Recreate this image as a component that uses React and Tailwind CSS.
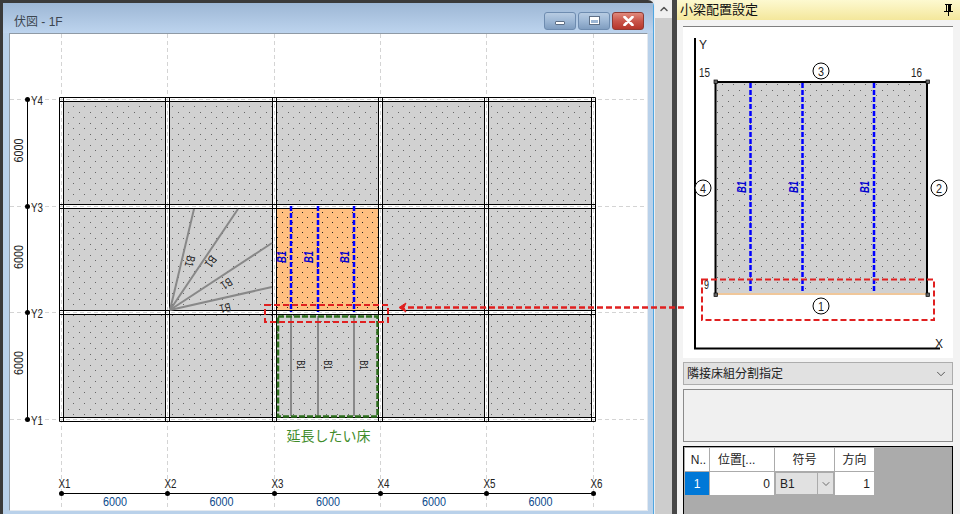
import React from "react";
import { ChevronDown, ChevronUp } from "lucide-react";

const xs = [61.5, 167.5, 274.5, 380.5, 486.5, 593.5];
const ys = [99.5, 206.5, 312.5, 419.5];
const beamX = [291, 318, 354];
const font = "'Liberation Sans', 'Noto Sans CJK JP', sans-serif";
const cjk = "font-['Liberation_Sans','Noto_Sans_CJK_JP',sans-serif]";

const DotPattern = ({ id, bg, dot, size = 11 }) => (
  <pattern id={id} width={size} height={size} patternUnits="userSpaceOnUse">
    <rect width={size} height={size} fill={bg} />
    <rect x={2} y={2} width={1} height={1} fill={dot} />
    <rect x={2 + Math.floor(size / 2)} y={2 + Math.floor(size / 2)} width={1} height={1} fill={dot} />
  </pattern>
);

// 幅の狭い図面文字
const Label = ({ length, size = 12, fill = "#222", ...rest }) => (
  <text
    fontFamily={font}
    fontSize={size}
    fill={fill}
    textLength={length}
    lengthAdjust="spacingAndGlyphs"
    {...rest}
  />
);

// 伏図の本体
const PlanDrawing = () => (
  <svg viewBox="10 34 635 476" className="block w-[635px] h-[476px]">
    <defs>
      <DotPattern id="floor" bg="#d1d1d1" dot="#666666" />
      <DotPattern id="floorOrange" bg="#ffbf80" dot="#222222" size={10} />
    </defs>

    {xs.map((x) => (
      <line key={x} x1={x} y1={34} x2={x} y2={510} stroke="#d4d4d4" strokeDasharray="4 3" />
    ))}
    {ys.map((y) => (
      <line key={y} x1={10} y1={y} x2={645} y2={y} stroke="#d4d4d4" strokeDasharray="4 3" />
    ))}

    {xs.slice(0, -1).map((x, i) =>
      ys.slice(0, -1).map((y, j) => (
        <rect
          key={`${i}-${j}`}
          x={x + 2}
          y={y + 2}
          width={xs[i + 1] - x - 4}
          height={ys[j + 1] - y - 4}
          fill={i === 2 && j === 1 ? "url(#floorOrange)" : "url(#floor)"}
        />
      ))
    )}

    {xs.map((x) => (
      <g key={x} stroke="#000" fill="none">
        <line x1={x - 2} y1={97.5} x2={x - 2} y2={421.5} />
        <line x1={x + 2} y1={97.5} x2={x + 2} y2={421.5} />
      </g>
    ))}
    {ys.map((y) => (
      <g key={y} stroke="#000" fill="none">
        <line x1={59.5} y1={y - 2} x2={595.5} y2={y - 2} />
        <line x1={59.5} y1={y + 2} x2={595.5} y2={y + 2} />
      </g>
    ))}

    {/* 放射状の小梁 */}
    <g stroke="#888" strokeWidth="2">
      <line x1={170} y1={310} x2={194} y2={209} />
      <line x1={170} y1={310} x2={238} y2={209} />
      <line x1={170} y1={310} x2={272} y2={243} />
      <line x1={170} y1={310} x2={272} y2={287} />
    </g>
    <g textAnchor="middle" dominantBaseline="middle">
      <Label size={12} length={11} transform="translate(189 261) rotate(103)">B1</Label>
      <Label size={12} length={11} transform="translate(210 261) rotate(124)">B1</Label>
      <Label size={12} length={11} transform="translate(226 283) rotate(147)">B1</Label>
      <Label size={12} length={11} transform="translate(225 307) rotate(167)">B1</Label>
    </g>

    {/* 小梁 */}
    {beamX.map((x) => (
      <g key={x}>
        <line x1={x} y1={206} x2={x} y2={312} stroke="#0000ff" strokeWidth="2.5" strokeDasharray="5 2" />
        <Label
          transform={`translate(${x - 8} 257) rotate(-90)`}
          size={12}
          length={12}
          fontWeight="bold"
          fontStyle="italic"
          fill="#0000d0"
          textAnchor="middle"
          dominantBaseline="middle"
        >
          B1
        </Label>
        <line x1={x} y1={316} x2={x} y2={416} stroke="#888" strokeWidth="2" />
        <Label
          transform={`translate(${x + 9} 365) rotate(90)`}
          size={11}
          length={9}
          textAnchor="middle"
          dominantBaseline="middle"
        >
          B1
        </Label>
      </g>
    ))}

    {/* 通り芯寸法 */}
    <line x1={27.5} y1={99.5} x2={27.5} y2={419.5} stroke="#000" />
    {ys.map((y, i) => (
      <g key={y}>
        <circle cx={27.5} cy={y} r={2.5} fill="#000" />
        <Label x={31} y={y + 5} length={12}>{`Y${4 - i}`}</Label>
      </g>
    ))}
    {[150.5, 257, 363].map((y) => (
      <Label key={y} transform={`translate(23 ${y}) rotate(-90)`} length={24} textAnchor="middle">
        6000
      </Label>
    ))}

    <line x1={61.5} y1={493.5} x2={593.5} y2={493.5} stroke="#000" />
    {xs.map((x, i) => (
      <g key={x}>
        <circle cx={x} cy={493.5} r={2.5} fill="#000" />
        <Label x={x + 3} y={487.5} length={12} textAnchor="middle">{`X${i + 1}`}</Label>
      </g>
    ))}
    {xs.slice(0, -1).map((x, i) => (
      <Label key={x} x={(x + xs[i + 1]) / 2 + 0.5} y={506} length={24} fill="#0b4a8c" textAnchor="middle">
        6000
      </Label>
    ))}

    <text x={328.5} y={441} fontFamily={font} fontSize="14" fill="#3f8c2a" textAnchor="middle">
      延長したい床
    </text>
  </svg>
);

// 小梁配置のプレビュー
const PreviewDrawing = () => {
  const circles = [
    ["1", 821, 306],
    ["2", 939, 188],
    ["3", 821, 71],
    ["4", 703, 188],
  ];
  return (
    <svg viewBox="683 27 270 331" className="block w-[270px] h-[331px]">
      <defs>
        <DotPattern id="previewFloor" bg="#d1d1d1" dot="#666666" />
      </defs>
      <path d="M695 38 V348.5 H940" fill="none" stroke="#000" strokeWidth="2" />
      <Label x={699} y={49} length={8}>Y</Label>
      <Label x={935} y={348} length={8}>X</Label>
      <Label x={699} y={77} length={11}>15</Label>
      <Label x={911} y={77} length={11}>16</Label>
      <Label x={704} y={289} length={5}>9</Label>

      <rect x={715} y={82} width={212} height={212} fill="url(#previewFloor)" />
      <line x1={715} y1={294} x2={927} y2={294} stroke="#f0c79a" strokeWidth="2" />
      <path d="M715.5 294 V82 H927 V294" fill="none" stroke="#000" strokeWidth="2" />
      {[750.5, 802.5, 874].map((x) => (
        <g key={x}>
          <line x1={x} y1={83} x2={x} y2={293} stroke="#0000ff" strokeWidth="2.5" strokeDasharray="5 2" />
          <Label
            transform={`translate(${x - 8} 187) rotate(-90)`}
            size={12}
            length={12}
            fontWeight="bold"
            fontStyle="italic"
            fill="#0000d0"
            textAnchor="middle"
            dominantBaseline="middle"
          >
            B1
          </Label>
        </g>
      ))}
      {[
        [714, 80],
        [926, 80],
        [714, 293],
        [926, 293],
      ].map(([x, y]) => (
        <rect key={`${x}-${y}`} x={x} y={y} width={3.5} height={3.5} fill="#666" stroke="#000" strokeWidth="0.7" />
      ))}
      {circles.map(([label, x, y]) => (
        <g key={label}>
          <circle cx={x} cy={y} r={8} fill="#fff" stroke="#000" />
          <Label x={x} y={y + 4.5} length={6} textAnchor="middle">{label}</Label>
        </g>
      ))}
    </svg>
  );
};

const CaptionButton = ({ className, children }) => (
  <div className={`w-[32px] h-[18px] rounded-[3px] border flex items-center justify-center ${className}`}>
    {children}
  </div>
);

const GridHead = ({ className, children }) => (
  <div className={`h-[23px] bg-white flex items-center justify-center text-[12px] text-[#222] mr-px ${className}`}>
    {children}
  </div>
);

export default function App() {
  return (
    <div className={`relative w-[960px] h-[514px] overflow-hidden flex bg-[#e9e9e9] ${cjk}`}>
      {/* 伏図ウィンドウ */}
      <div className="w-[654px] h-full shrink-0 flex flex-col border-l-[3px] border-t-[3px] border-r border-[#3a3a3a] border-r-[#4fa6e0] rounded-tr-md bg-[#b9d1ea]">
        <div className="h-[30px] shrink-0 flex items-center justify-between pl-[11px] pr-[9px] bg-gradient-to-b from-[#9db7d5] to-[#bdd4ee]">
          <span className="text-[12px] text-[#3c4650] mt-2">伏図 - 1F</span>
          <div className="flex gap-[2px] mt-[5px]">
            <CaptionButton className="border-[#6e8cb0] bg-gradient-to-b from-[#b7cbe2] via-[#9db7d5] to-[#7f9dc0]">
              <div className="w-[10px] h-[4px] mt-[5px] bg-white border border-[#5d6f86] rounded-[1px]" />
            </CaptionButton>
            <CaptionButton className="border-[#6e8cb0] bg-gradient-to-b from-[#b7cbe2] via-[#9db7d5] to-[#7f9dc0]">
              <div className="w-[11px] h-[9px] bg-white border border-[#5d6f86] flex items-center justify-center">
                <div className="w-[7px] h-[3px] mt-px bg-[#9db7d5]" />
              </div>
            </CaptionButton>
            <CaptionButton className="border-[#8e3a33] bg-gradient-to-b from-[#e0897c] via-[#c9554a] to-[#b6352a]">
              <svg viewBox="0 0 12 10" className="w-[13px] h-[10px]">
                <path d="M2 1 L10 9 M10 1 L2 9" stroke="#fff" strokeWidth="2.6" strokeLinecap="round" />
              </svg>
            </CaptionButton>
          </div>
        </div>
        <div className="ml-[6px] mr-[5px] border-t border-l border-r border-b border-[#8f9aa5] border-r-[#e4e9ef] border-b-[#e4e9ef] bg-white">
          <PlanDrawing />
        </div>
      </div>

      {/* スクロールバー */}
      <div className="w-[18px] shrink-0 bg-[#cdcdcd] border-l border-[#e8eef4] flex flex-col">
        <div className="h-[18px] bg-[#f0f0f0] flex items-center justify-center">
          <ChevronUp className="w-3 h-3 text-[#555]" strokeWidth={3} />
        </div>
      </div>
      <div className="w-[5px] shrink-0 bg-[#474747]" />

      {/* 小梁配置設定パネル */}
      <div className="flex-1 min-w-0 flex flex-col bg-[#f3f3f3]">
        <div className="h-[20px] shrink-0 flex items-center justify-between pl-[3px] pr-[7px] bg-gradient-to-b from-[#fdf9d0] to-[#f4e79b]">
          <span className="text-[13px] text-[#111]">小梁配置設定</span>
          <svg viewBox="0 0 9 12" className="w-[9px] h-[12px]" shapeRendering="crispEdges">
            <path d="M1 0h7v1H7v6h2v1H5v4H4V8H0V7h2V1H1z M3 1v6h1V1z" fill="#000" fillRule="evenodd" />
          </svg>
        </div>
        <div className="flex-1 min-h-0 flex flex-col pl-[6px] pr-[7px] pt-[6px] gap-[4px]">
          <div className="h-[332px] shrink-0 bg-white border-t border-[#808080]">
            <PreviewDrawing />
          </div>
          <div className="h-[23px] shrink-0 flex items-center justify-between pl-[3px] pr-1 bg-[#e1e1e1] border border-[#adadad] text-[12px] text-[#222]">
            <span>隣接床組分割指定</span>
            <ChevronDown className="w-3.5 h-3.5 text-[#444]" strokeWidth={1.5} />
          </div>
          <div className="h-[53px] shrink-0 bg-[#f0f0f0] border border-[#8a8a8a]" />
          <div className="flex-1 min-h-0 bg-[#ababab] border border-black border-b-0 pl-px pt-px">
            <div className="grid grid-cols-[25px_65px_60px_40px] w-[190px]">
              <GridHead className="pl-[3px]">N..</GridHead>
              <GridHead className="justify-start pl-2">位置[...</GridHead>
              <GridHead>符号</GridHead>
              <GridHead>方向</GridHead>
              <div className="h-[23px] bg-[#0078d7] text-white text-[12px] flex items-center justify-center mr-px mt-px">1</div>
              <div className="h-[23px] bg-white text-[12px] text-[#222] flex items-center justify-end pr-1 mr-px mt-px">0</div>
              <div className="h-[23px] bg-[#e1e1e1] border border-[#ababab] text-[12px] text-[#222] flex items-center justify-between mr-px mt-px pl-1">
                <span>B1</span>
                <div className="w-[16px] h-full border-l border-[#ababab] flex items-center justify-center">
                  <ChevronDown className="w-3 h-3 text-[#444]" strokeWidth={1.5} />
                </div>
              </div>
              <div className="h-[23px] bg-white text-[12px] text-[#222] flex items-center justify-end pr-1 mr-px mt-px">1</div>
            </div>
          </div>
        </div>
      </div>

      {/* 赤と緑の注記 */}
      <svg viewBox="0 0 960 514" className="absolute inset-0 w-[960px] h-[514px] pointer-events-none">
        <rect x={278} y={316.5} width={99.5} height={100} fill="none" stroke="#2e6f1e" strokeWidth="2.5" strokeDasharray="6 2" />
        <rect x={265} y={305} width={123} height={17} fill="none" stroke="#e02020" strokeWidth="2" strokeDasharray="6 3" />
        <rect x={702} y={279.5} width={232} height={40.5} fill="none" stroke="#e02020" strokeWidth="2" strokeDasharray="6 3" />
        <line x1={684} y1={307.5} x2={405} y2={307.5} stroke="#e02020" strokeWidth="2.5" strokeDasharray="6 3" />
        <path d="M399 307.5 L406 303 L404 307.5 L406 312 Z" fill="#e02020" stroke="#e02020" />
      </svg>
    </div>
  );
}
